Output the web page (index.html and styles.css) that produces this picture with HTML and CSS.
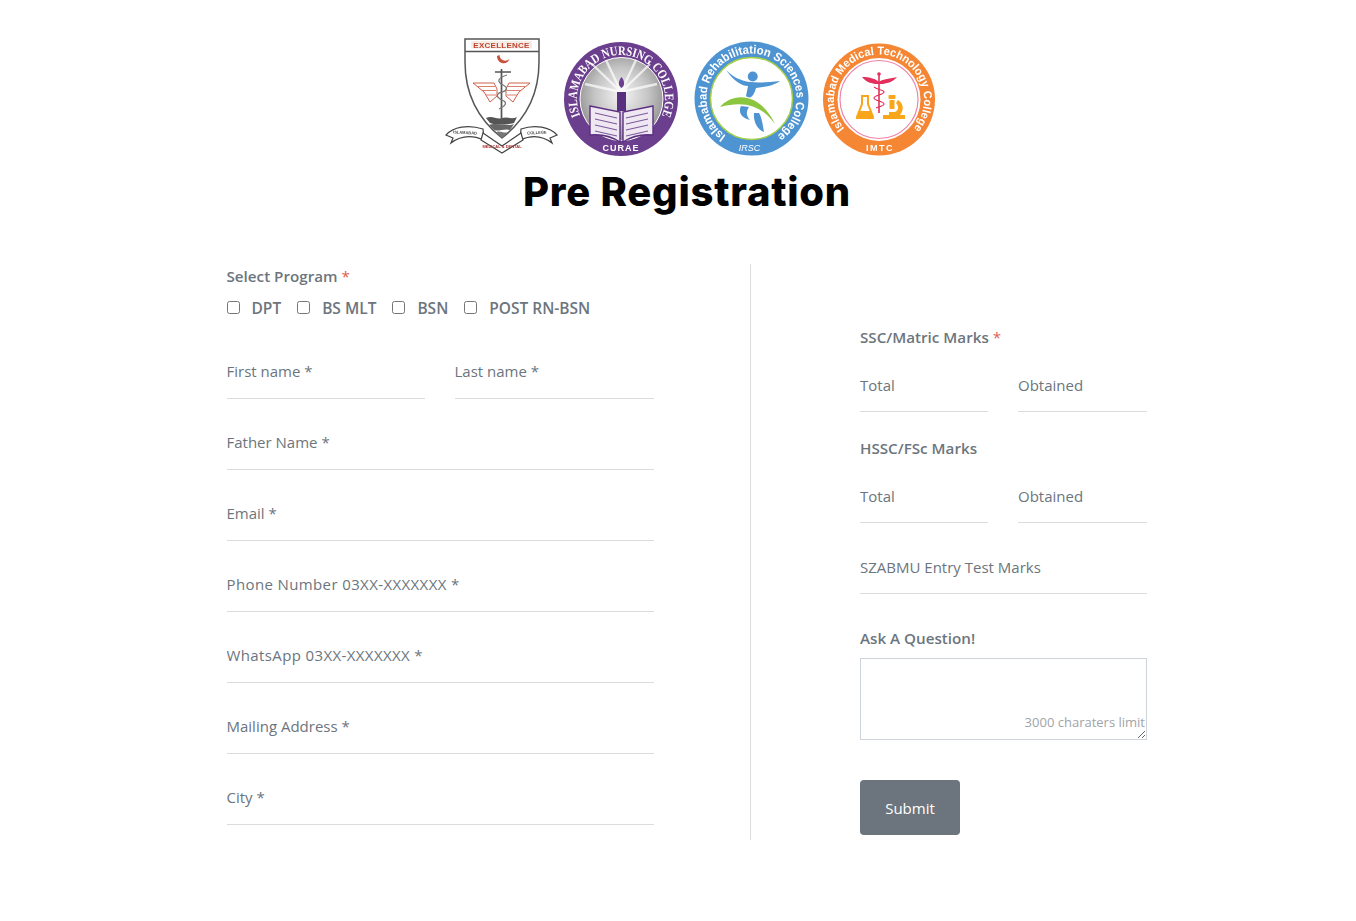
FILE: index.html
```html
<!DOCTYPE html>
<html lang="en">
<head>
<meta charset="utf-8">
<title>Pre Registration</title>
<link rel="stylesheet" href="styles.css">
</head>
<body>
<header class="head">
<svg class="logos" width="490" height="120" viewBox="445 38 490 120" xmlns="http://www.w3.org/2000/svg">
  <defs>
    <radialGradient id="silver" cx="50%" cy="45%" r="55%"><stop offset="0" stop-color="#f4f4f4"/><stop offset="0.6" stop-color="#c4c4c4"/><stop offset="1" stop-color="#929292"/></radialGradient>
    <path id="arc2" d="M580.200 115.500A44 44 0 1 1 661.800 115.500"/>
    <path id="arc3" d="M725.700 135.400A45 45 0 1 1 777.300 135.400"/>
    <path id="arc4" d="M844.500 128.400A45 45 0 1 1 913.500 128.400"/>
  </defs>
  <!-- Excellence crest -->
  <g>
    <path d="M465 39H539V62C539 95 525 120 502 138C479 120 465 95 465 62Z" fill="#fff" stroke="#555" stroke-width="1.500"/>
    <path d="M465 51.500H539" stroke="#555" stroke-width="1.400"/>
    <rect x="471" y="41" width="61" height="7.500" fill="#f6ece6"/>
    <text x="501.500" y="47.500" class="t-ex">EXCELLENCE</text>
    <path d="M497 56C497 64 507 66 509.500 59C506 62 500 61 499.500 55Z" fill="#c9503c"/>
    <path d="M473 83H494L497 89V96L490 102L484 92ZM530 83H509L506 89V96L513 102L519 92Z" fill="#fff" stroke="#d2604a" stroke-width="1"/>
    <path d="M478 86.500H495M482 90.500H496M486 95H496M525 86.500H508M521 90.500H507M517 95H507" stroke="#d2604a" stroke-width=".8"/>
    <path d="M495 72H511M501.500 69V118" stroke="#555" stroke-width="1.700"/>
    <path d="M507 75C497 78 497 82 503 85C509 88 507 91 499 93C495 96 499 99 504 101C508 104 503 107 499 109" fill="none" stroke="#777" stroke-width="1.300"/>
    <path d="M486 118C492 115 497 120 502 118C507 116 512 120 517 117L514 123C508 125 496 125 490 123Z" fill="#555"/>
    <path d="M489 125C496 122 508 127 514 124L510 130C505 128 498 132 494 130Z" fill="#666"/>
    <path d="M496 132C499 130 505 134 508 132L502 138Z" fill="#777"/>
    <path d="M446 135C453 127 468 124 483 129L484 140C470 134 460 136 451 143L453 138Z" fill="#fff" stroke="#444" stroke-width="1.200"/>
    <path d="M557 135C550 127 535 124 521 129L520 140C533 134 543 136 552 143L550 138Z" fill="#fff" stroke="#444" stroke-width="1.200"/>
    <path d="M483 133L502 146L521 133L523 140L502 153L481 140Z" fill="#fff" stroke="#444" stroke-width="1.200"/>
    <text x="465" y="134" class="t-rib" transform="rotate(3 465 134)">ISLAMABAD</text>
    <text x="502" y="148" class="t-rib t-red">MEDICAL &amp; DENTAL</text>
    <text x="537" y="134" class="t-rib" transform="rotate(-3 537 134)">COLLEGE</text>
  </g>
  <!-- Nursing college -->
  <g>
    <circle cx="621" cy="99" r="57" fill="#6b3f8e"/>
    <circle cx="621.500" cy="99" r="41.500" fill="url(#silver)" stroke="#fff" stroke-width="1"/>
    <path d="M621 92L592 64M621 92L606 60M621 92L636 60M621 92L650 64M621 92L585 84M621 92L657 84" stroke="#fff" stroke-width="2.400" opacity=".7"/>
    <path d="M621.500 77C618 81 618 86 621.500 88C625 86 625 81 621.500 77Z" fill="#6b3f8e"/>
    <rect x="617" y="92" width="9" height="19" fill="#5b2f80"/>
    <path d="M590 106L620 112V142C611 136 600 134 590 135ZM653 106L623 112V142C632 136 643 134 653 135Z" fill="#efe8f3" stroke="#5b2f80" stroke-width="1.400"/>
    <path d="M595 113L617 118M595 119L617 124M595 125L617 130M595 131L617 136M648 113L626 118M648 119L626 124M648 125L626 130M648 131L626 136" stroke="#7d5a9c" stroke-width="1.100"/>
    <text class="t-nur"><textPath href="#arc2" startOffset="50%" textLength="172" lengthAdjust="spacingAndGlyphs">ISLAMABAD NURSING COLLEGE</textPath></text>
    <text x="621" y="151" class="t-nur t-small">CURAE</text>
  </g>
  <!-- Rehabilitation college -->
  <g>
    <circle cx="751.500" cy="98.500" r="57" fill="#4f94d2"/>
    <circle cx="751.500" cy="98.500" r="41" fill="#fff" stroke="#a3d046" stroke-width="1.500"/>
    <circle cx="752.700" cy="76.500" r="5" fill="#4f94d2"/>
    <path d="M726 70C733 80 741 86 748 86L746 96C751 100 754 95 756 88C766 87 775 85 780 81C770 82 760 83 750 82C740 81 732 76 726 70Z" fill="#4f94d2"/>
    <path d="M720 107C733 92 760 92 775 124C762 106 745 100 720 107Z" fill="#8cc63f"/>
    <path d="M741 106C738 112 741 118 750 120C746 116 746 111 749 107Z" fill="#4f94d2"/>
    <path d="M754 113C753 122 758 130 764 132C763 126 762 118 759 113Z" fill="#4f94d2"/>
    <text class="t-arc"><textPath href="#arc3" startOffset="50%" textLength="228" lengthAdjust="spacingAndGlyphs">Islamabad Rehabilitation Sciences College</textPath></text>
    <text x="749.500" y="151" class="t-abbr">IRSC</text>
  </g>
  <!-- Medical technology college -->
  <g>
    <circle cx="879" cy="99.500" r="56" fill="#f58634"/>
    <circle cx="879" cy="99.500" r="41.500" fill="#fff"/>
    <circle cx="879" cy="99.500" r="39" fill="none" stroke="#ef84a8" stroke-width="1.200"/>
    <path d="M862 77C870 77 876 79 879 82C882 79 888 79 897 77C893 82 886 84 881 84H877C872 84 866 82 862 77Z" fill="#e22f5c"/>
    <path d="M879 73V113" stroke="#e22f5c" stroke-width="1.600"/>
    <circle cx="879" cy="74" r="1.800" fill="#e22f5c"/>
    <path d="M874 87C878 90 884 90 884 92C884 95 874 95 874 98C874 101 884 101 884 104C884 106 878 107 876 108" fill="none" stroke="#e22f5c" stroke-width="1.100"/>
    <path d="M862 96H868V104L873 117C873 118 872 118 871 118H859C858 118 857 118 857 117L862 104Z" fill="#fff" stroke="#f9a61a" stroke-width="2"/>
    <path d="M859 111H871L874 119H856Z" fill="#f9a61a"/>
    <path d="M883 115H905V119H883Z" fill="#f9a61a"/>
    <path d="M900 115C904 110 904 104 898 100L896 103C899 106 899 110 895 112H889V115Z" fill="#f9a61a"/>
    <rect x="888.500" y="95" width="7" height="4" rx="1" fill="#f9a61a"/>
    <rect x="889.500" y="100" width="5" height="9" fill="#f9a61a"/>
    <text class="t-arc t-med"><textPath href="#arc4" startOffset="50%" textLength="204" lengthAdjust="spacingAndGlyphs">Islamabad Medical Technology College</textPath></text>
    <text x="880" y="151" class="t-abbr t-wide">IMTC</text>
  </g>
</svg>
<h1 class="title">Pre Registration</h1>
</header>

<form class="form">
  <section class="col col-left">
    <p class="label">Select Program <span class="req">*</span></p>
    <div class="programs">
      <label class="prog"><input type="checkbox"><span>DPT</span></label>
      <label class="prog"><input type="checkbox"><span>BS MLT</span></label>
      <label class="prog"><input type="checkbox"><span>BSN</span></label>
      <label class="prog"><input type="checkbox"><span>POST RN-BSN</span></label>
    </div>
    <div class="pair pair-wide">
      <input class="field" type="text" placeholder="First name *">
      <input class="field" type="text" placeholder="Last name *">
    </div>
    <input class="field" type="text" placeholder="Father Name *">
    <input class="field" type="text" placeholder="Email *">
    <input class="field field-phone" type="text" placeholder="Phone Number 03XX-XXXXXXX *">
    <input class="field field-phone" type="text" placeholder="WhatsApp 03XX-XXXXXXX *">
    <input class="field" type="text" placeholder="Mailing Address *">
    <input class="field" type="text" placeholder="City *">
  </section>
  <section class="col col-right">
    <p class="label">SSC/Matric Marks <span class="req">*</span></p>
    <div class="pair">
      <input class="field" type="text" placeholder="Total">
      <input class="field" type="text" placeholder="Obtained">
    </div>
    <p class="label label-next">HSSC/FSc Marks</p>
    <div class="pair">
      <input class="field" type="text" placeholder="Total">
      <input class="field" type="text" placeholder="Obtained">
    </div>
    <input class="field field-test" type="text" placeholder="SZABMU Entry Test Marks">
    <p class="label label-ask">Ask A Question!</p>
    <textarea class="question" placeholder="3000 charaters limit"></textarea>
    <button class="submit" type="button">Submit</button>
  </section>
</form>
</body>
</html>
```

FILE: styles.css
```css
* { box-sizing: border-box; }

body {
  margin: 0;
  background: #fff;
  color: #6c757d;
  font-family: "Open Sans", "Noto Sans", sans-serif;
  font-size: 15px;
  line-height: 24px;
}

.head { padding-top: 38px; }

.logos {
  display: block;
  margin-left: 445px;
  filter: blur(0.35px);
}

.t-ex { font: 700 8px "Liberation Sans", sans-serif; letter-spacing: .25px; fill: #c0442f; text-anchor: middle; }
.t-rib { font: 700 4px "Liberation Sans", sans-serif; fill: #444; text-anchor: middle; }
.t-red { fill: #a33; }
.t-nur { font: 700 13px "Liberation Serif", serif; fill: #fff; text-anchor: middle; }
.t-small { font: 700 9px "Liberation Sans", sans-serif; letter-spacing: 1px; }
.t-arc { font: 700 12px "Liberation Sans", sans-serif; fill: #fff; text-anchor: middle; }
.t-med { font-size: 11.500px; }
.t-abbr { font: italic 400 9px "Liberation Sans", sans-serif; fill: #fff; text-anchor: middle; }
.t-wide { font-style: normal; font-weight: 700; letter-spacing: 1.500px; }

.title {
  margin: 8px 0 0;
  padding-left: 18px;
  color: #000;
  font-family: Inter, "Liberation Sans", sans-serif;
  font-size: 40px;
  font-weight: 800;
  letter-spacing: .75px;
  line-height: 52px;
  text-align: center;
}

.form {
  display: flex;
  margin: 46px 0 0 226.500px;
  width: 920.500px;
}

.col { display: flex; flex-direction: column; }

.col-left {
  width: 524.500px;
  padding-right: 96.500px;
  border-right: 1px solid #dcdcdc;
  height: 576px;
}

.col-right {
  width: 396px;
  padding: 61px 0 0 109px;
}

.label {
  flex: none;
  margin: 0 0 8px;
  font-size: 15.200px;
  font-weight: 600;
}

.req { color: #e0604f; font-weight: 400; }

.label-next { margin-top: 24px; }
.label-ask { margin-top: 32px; }

.programs {
  flex: none;
  display: flex;
  gap: 16px;
  margin-bottom: 24px;
  height: 24px;
  font-size: 15.500px;
  font-weight: 600;
}

.prog {
  display: flex;
  align-items: center;
  gap: 12px;
}

.prog input { margin: -1px 0 0; }

.pair {
  flex: none;
  display: grid;
  grid-template-columns: calc(50% - 15.500px) 1fr;
  gap: 30px;
}

.field {
  flex: none;
  display: block;
  width: 100%;
  height: 55px;
  margin: 0 0 16px;
  padding: 0;
  border: 0;
  border-bottom: 1px solid #dcdcdc;
  background: transparent;
  color: #6c757d;
  font: inherit;
  outline: none;
}

.pair .field { margin-bottom: 0; }
.pair-wide { margin-bottom: 16px; }
.field-phone { letter-spacing: .38px; }
.field-test { margin: 16px 0 0; }
.col-right .field { padding-top: 2px; }

.field::placeholder { color: #6c757d; opacity: 1; }

.question {
  flex: none;
  display: block;
  width: 100%;
  height: 82px;
  padding: 53px 1px 0 0;
  border: 1px solid #ced4da;
  border-radius: 0;
  background: #fff;
  color: #6c757d;
  font: 13px/20px "Open Sans", "Noto Sans", sans-serif;
  text-align: right;
  overflow: hidden;
  outline: none;
}

.question::placeholder { color: #a0a4a8; opacity: 1; }

.submit {
  flex: none;
  align-self: flex-start;
  width: 100px;
  height: 55px;
  margin-top: 40px;
  border: 0;
  border-radius: 4px;
  background: #6c757d;
  color: #fff;
  font: inherit;
}
```
